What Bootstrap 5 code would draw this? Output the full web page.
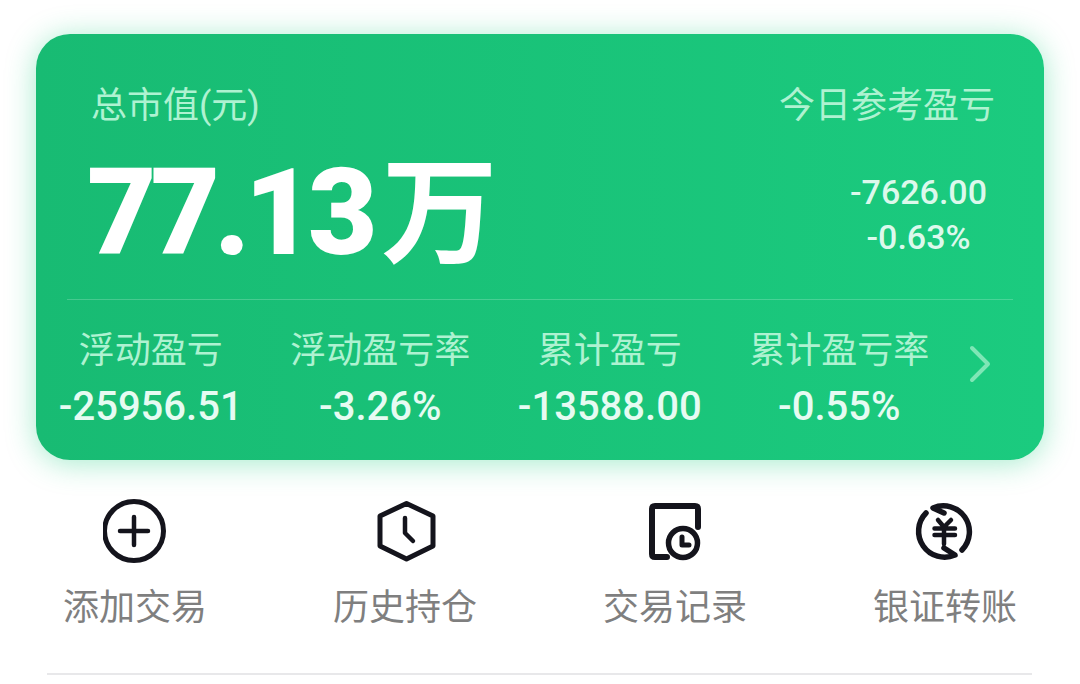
<!DOCTYPE html>
<html lang="zh-CN">
<head>
  <meta charset="UTF-8" />
  <meta name="viewport" content="width=device-width, initial-scale=1.0" />
  <title>总市值</title>
  <link href="https://cdn.jsdelivr.net/npm/bootstrap@5.3.0/dist/css/bootstrap.min.css" rel="stylesheet" />
  <style>
    body {
      background: #fff;
      font-family: Roboto, "Noto Sans CJK SC", sans-serif;
      overflow: hidden;
    }
    /* green asset card */
    .asset-wrap { padding: 34px 36px 0; }
    .asset-card {
      height: 426px;
      border-radius: 34px;
      background: linear-gradient(90deg, #18bb73, #1bcb7f);
      box-shadow: 0 3px 30px rgba(28, 205, 128, .4);
    }
    .asset-top { padding: 49px 49px 0 55px; height: 265px; }
    .soft-label { font-size: 36px; line-height: 46px; color: #aef2d1; }
    .big-value {
      font-size: 120px;
      line-height: 120px;
      font-weight: 900;
      color: #fff;
      letter-spacing: -6px;
      margin: 14px 0 0 -4px;
    }
    .big-unit {
      font-size: 116px;
      font-weight: 700;
      letter-spacing: 0;
      margin-left: 10px;
      font-family: "Noto Sans CJK SC", sans-serif;
    }
    .today-nums {
      display: inline-block;
      margin: 41px 8px 0 0;
      font-size: 34px;
      font-weight: 500;
      line-height: 45px;
      color: #dcf9ec;
      text-align: center;
    }
    .asset-line { height: 1px; margin: 0 31px; background: rgba(255, 255, 255, .2); }
    .stat-cell { flex: 0 0 229.5px; text-align: center; }
    .stat-label { font-size: 36px; line-height: 46px; color: #aef2d1; margin-top: 28px; }
    .stat-num { font-size: 40px; font-weight: 500; line-height: 50px; color: #e6fbf2; margin-top: 8px; }
    .stat-arrow { margin: 44px 0 0 14px; }
    /* quick actions */
    .action-row { margin-top: 39px; }
    .action-label {
      font-size: 36px;
      line-height: 48px;
      color: #7f7f7f;
      margin-top: 21px;
    }
    .action-icon { display: block; margin: 0 auto; }
    .action-icon * { fill: none; stroke: #14141c; stroke-linecap: round; stroke-linejoin: round; }
    .page-line { height: 2px; margin: 41px 48px 0 47px; background: #e8e8ea; }
  </style>
</head>
<body>
  <div class="asset-wrap">
    <div class="asset-card">
      <div class="asset-top d-flex justify-content-between">
        <div>
          <div class="soft-label">总市值(元)</div>
          <div class="big-value">77.13<span class="big-unit">万</span></div>
        </div>
        <div class="text-end">
          <div class="soft-label">今日参考盈亏</div>
          <div class="today-nums">-7626.00<br />-0.63%</div>
        </div>
      </div>
      <div class="asset-line"></div>
      <div class="d-flex">
        <div class="stat-cell">
          <div class="stat-label">浮动盈亏</div>
          <div class="stat-num">-25956.51</div>
        </div>
        <div class="stat-cell">
          <div class="stat-label">浮动盈亏率</div>
          <div class="stat-num">-3.26%</div>
        </div>
        <div class="stat-cell">
          <div class="stat-label">累计盈亏</div>
          <div class="stat-num">-13588.00</div>
        </div>
        <div class="stat-cell">
          <div class="stat-label">累计盈亏率</div>
          <div class="stat-num">-0.55%</div>
        </div>
        <svg class="stat-arrow" width="24" height="40" viewBox="0 0 24 40">
          <path d="M4 4 L20 20 L4 36" fill="none" stroke="#7fe6b6" stroke-width="4" stroke-linecap="round" stroke-linejoin="round" />
        </svg>
      </div>
    </div>
  </div>

  <div class="row g-0 action-row text-center">
    <div class="col-3">
      <svg class="action-icon" width="64" height="64" viewBox="0 0 64 64">
        <circle cx="31" cy="32" r="29.5" stroke-width="5" />
        <path d="M17 32 H45 M31 18 V46" stroke-width="4.5" />
      </svg>
      <div class="action-label">添加交易</div>
    </div>
    <div class="col-3">
      <svg class="action-icon" width="64" height="64" viewBox="0 0 64 64">
        <path d="M33.5 4.5 L60 17 V47 L33.5 60 L7 47 V17 Z" stroke-width="5" />
        <path d="M32 19 V34 L40 42" stroke-width="4.5" />
      </svg>
      <div class="action-label">历史持仓</div>
    </div>
    <div class="col-3">
      <svg class="action-icon" width="64" height="64" viewBox="0 0 64 64">
        <path d="M55 28 V10 Q55 7 52 7 H12 Q9 7 9 10 V55 Q9 58 12 58 H24" stroke-width="6" />
        <circle cx="40" cy="44" r="14.5" stroke-width="5.5" />
        <path d="M39 38 V46 H46" stroke-width="5" />
      </svg>
      <div class="action-label">交易记录</div>
    </div>
    <div class="col-3">
      <svg class="action-icon" width="64" height="64" viewBox="0 0 64 64">
        <path d="M13 14 A26 26 0 0 0 42 56 L31 49" stroke-width="5.5" />
        <path d="M49 51 A26 26 0 0 0 20 9 L31 14" stroke-width="5.5" />
        <path d="M25 21 L31 28 L38 21 M21.5 29.5 H42 M21.5 36 H42 M31 28 V45" stroke-width="4.5" />
      </svg>
      <div class="action-label">银证转账</div>
    </div>
  </div>
  <div class="page-line"></div>

  <script src="https://cdn.jsdelivr.net/npm/bootstrap@5.3.0/dist/js/bootstrap.bundle.min.js"></script>
</body>
</html>
